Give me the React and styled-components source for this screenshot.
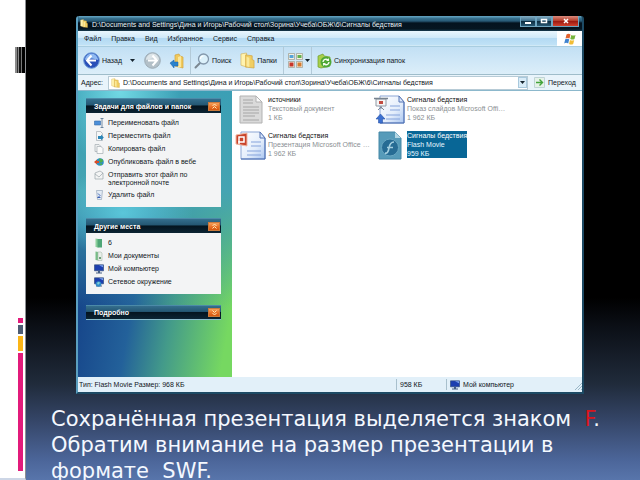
import React from "react";
import styled, { createGlobalStyle } from "styled-components";

const Global = createGlobalStyle`
  * { box-sizing: border-box; }
  body { margin: 0; background: #000; overflow: hidden; }
  button, input { font: inherit; color: inherit; margin: 0; padding: 0; border: 0; background: none; }
  svg { display: block; flex: none; }
`;

const Slide = styled.main`
  display: grid;
  grid-template-columns: 26px minmax(0, 1fr);
  height: 100vh;
`;

const Rail = styled.aside`
  display: flex;
  flex-direction: column;
  align-items: flex-end;
  background: #fff;
  border-right: 1px solid #8d8f93;
  border-bottom: 2px solid #cdd6e6;
  padding: 47px 0 7px;
`;

const Barcode = styled.div`
  width: 10px;
  height: 26px;
  margin-bottom: auto;
  background: linear-gradient(90deg, #8a8a8a 0 2px, #333 2px 3px, #8a8a8a 3px 4px, #111 4px 6px, #777 6px 7px, #000 7px 10px);
`;

const Mark = styled.div`
  width: 5px;
  height: ${(p) => p.$size}px;
  margin: 2px 2px 0 0;
  background: ${(p) => p.$color};
`;

const Stage = styled.section`
  display: flex;
  flex-direction: column;
  min-width: 0;
  min-height: 0;
  background: linear-gradient(#000 0 62%, #0b0f16 68%, #202b3b 80%, #36476a 88%, #4c669a 96%, #5875ab);
`;

const Caption = styled.p`
  flex: 0 0 86px;
  min-height: 0;
  margin: 0;
  padding: 12px 20px 0 25px;
  color: #f4f8ff;
  font: 21px/26px "DejaVu Sans", sans-serif;
  white-space: pre-wrap;
`;

const Red = styled.span`
  color: #d8141c;
`;

const Window = styled.section`
  flex: 1;
  min-height: 0;
  display: flex;
  flex-direction: column;
  margin: 16px 56px 0 50px;
  border: solid #1d4a64;
  border-width: 0 2px 2px;
  border-left-color: #5b9fc0;
  border-radius: 3px 3px 0 0;
  overflow: hidden;
  color: #10161c;
  font: 7px/9px "Liberation Sans", sans-serif;
  white-space: nowrap;
`;

const TitleBar = styled.header`
  display: flex;
  flex: 0 0 15px;
  align-items: center;
  gap: 4px;
  padding: 0 3px 0 2px;
  color: #e6f2f8;
  background: linear-gradient(#5d9cba 0 1px, #3a7592 2px, #285a77 5px, #04131f 7px, #061621 13px, #173c50);
`;

const TitleText = styled.h1`
  flex: 1;
  min-width: 0;
  margin: 0;
  padding-top: 2px;
  overflow: hidden;
  font: inherit;
`;

const Controls = styled.div`
  display: flex;
  align-self: flex-start;
`;

const Control = styled.button`
  display: grid;
  place-items: center;
  width: ${(p) => (p.$close ? 27 : 16)}px;
  height: 11px;
  border: 1px solid #6fa5c0;
  border-top: 0;
  background: ${(p) => (p.$close
    ? "linear-gradient(#d98b7d, #b8402f 45%, #98170f 50%, #d0402c)"
    : "linear-gradient(#84aec4, #42738f 45%, #0b2a3e 50%, #285873)")};
`;

const MenuBar = styled.nav`
  display: flex;
  flex: 0 0 15px;
  background: linear-gradient(#e9f6fd, #cfe9f9 45%, #b4daf3 50%, #bfe1f6 90%, #d9edf6);
`;

const MenuList = styled.div`
  display: flex;
  flex: 1;
  align-items: center;
  gap: 10px;
  padding-left: 6px;
`;

const FlagCell = styled.div`
  display: grid;
  place-items: center;
  width: 25px;
  background: #fff;
`;

const ToolBar = styled.div`
  display: flex;
  flex: 0 0 29px;
  border-top: 1px solid #a9cde0;
  border-bottom: 1px solid #9fbdca;
  background: linear-gradient(#c2e0f4, #cfe7f7 50%, #dceef9);
`;

const ToolGroup = styled.div`
  display: flex;
  align-items: center;
  justify-content: space-between;
  width: ${(p) => p.$w}px;
  padding: 0 ${(p) => p.$end || 6}px 0 ${(p) => p.$start || 3}px;
  border-right: ${(p) => (p.$last ? 0 : 1)}px solid #b3cad8;
`;

const ToolButton = styled.button`
  display: flex;
  align-items: center;
  gap: 2px;
`;

const AddressBar = styled.form`
  display: flex;
  flex: 0 0 16px;
  align-items: center;
  padding-left: 3px;
  background: #e9f4fb;
  border-bottom: 1px solid #8cb8cc;
`;

const AddressLabel = styled.label`
  width: 27px;
`;

const AddressField = styled.div`
  display: flex;
  flex: 1;
  align-items: center;
  gap: 3px;
  height: 14px;
  padding-left: 2px;
  border: 1px solid #b7cbd6;
  background: #fff;
`;

const AddressInput = styled.input`
  flex: 1;
  min-width: 0;
  height: 12px;
  outline: 0;
`;

const DropButton = styled.button`
  display: grid;
  place-items: center;
  width: 9px;
  height: 11px;
  border: 1px solid #a9c9dd;
  background: #d9ecf8;
`;

const GoButton = styled.button`
  display: flex;
  align-items: center;
  gap: 3px;
  width: 54px;
  padding-left: 6px;
`;

const Body = styled.div`
  display: grid;
  flex: 1;
  min-height: 0;
  grid-template-columns: 154px minmax(0, 1fr);
`;

const Side = styled.aside`
  display: flex;
  flex-direction: column;
  gap: 11px;
  padding: 7px 11px 0 8px;
  background:
    radial-gradient(ellipse 60px 80px at 42px 0, #7fe6f0cc, #5cc6d900),
    radial-gradient(ellipse 70px 45px at 45px 122px, #62d3e6cc, #5cc6d900),
    linear-gradient(#3b9fb5, #45a4b2 35%, #3f9fae99 50%, #3f9fae00 76%),
    linear-gradient(100deg, #17478b 20%, #23619a 45%, #439a8a 65%, #76d861 94%);
`;

const Panel = styled.section`
  background: #f3f4f5;
`;

const PanelHead = styled.header`
  display: flex;
  align-items: center;
  justify-content: space-between;
  height: 15px;
  padding: 0 1px 0 8px;
  border: 1px solid #4c8aa8;
  border-width: 1px 0 0;
  border-bottom: ${(p) => (p.$closed ? "1px solid #8bbdcc" : 0)};
  background: linear-gradient(#346e8d, #245773 42%, #04141f 50%, #0b2433);
  color: #fff;
`;

const PanelTitle = styled.h2`
  margin: 0;
  font: inherit;
  font-weight: bold;
`;

const Toggle = styled.button`
  display: grid;
  place-items: center;
  width: 12px;
  height: 9px;
  border: 1px solid #c97a3c;
  background: linear-gradient(#f3a15b, #e9742a 50%, #d4560d);
`;

const TaskList = styled.ul`
  margin: 0;
  padding: 4px 8px 5px;
  list-style: none;
`;

const Task = styled.li`
  min-height: 13px;
  padding: 2px 0;
`;

const TaskLink = styled.a`
  display: flex;
  gap: 4px;
  color: inherit;
  text-decoration: none;
  line-height: 8px;
  & > svg { margin: -1px 0; }
`;

const Files = styled.div`
  display: grid;
  grid-template-columns: repeat(auto-fill, 138px);
  grid-auto-rows: 27px;
  align-content: start;
  gap: 9px 1px;
  padding: 4px 3px;
  background: #fff;
`;

const File = styled.div`
  display: grid;
  grid-template-columns: 31px max-content;
  gap: 2px;
  justify-items: center;
  align-items: start;
`;

const FileText = styled.div`
  color: ${(p) => (p.$selected ? "#e6f6ff" : "#8b8f93")};
  background: ${(p) => (p.$selected ? "#086696" : "transparent")};
`;

const FileName = styled.div`
  color: ${(p) => (p.$selected ? "#fff" : "#101010")};
`;

const StatusBar = styled.footer`
  display: flex;
  flex: 0 0 15px;
  align-items: center;
  padding: 0 0 0 1px;
  background: #e2f0f9;
`;

const StatusCell = styled.div`
  display: flex;
  align-items: center;
  gap: 3px;
  height: 11px;
  padding-left: 3px;
  width: ${(p) => p.$w}px;
  border-left: 1px solid #a8c0cd;
`;

const StatusMain = styled.div`
  flex: 1;
`;

const Grip = styled.svg`
  margin: 3px 0 0 auto;
`;

const Caret = () => (
  <svg width="5" height="3" viewBox="0 0 5 3"><path d="M0 0h5L2.5 3z" fill="#15242e" /></svg>
);

const FolderIcon = ({ w = 8, h = 9 }) => (
  <svg width={w} height={h} viewBox="0 0 16 18">
    <path d="M1 2l6-1v15l-6-2z" fill="#fff3b0" stroke="#cfa94a" strokeWidth=".6" />
    <path d="M6 3l7 1v4l2 1v8l-9-1z" fill="#f0ce62" stroke="#d0a13a" strokeWidth=".7" />
    <path d="M7 5l3 1v10l-3-1z" fill="#fae99c" />
  </svg>
);

const RoundArrow = ({ back }) => (
  <svg width="17" height="17" viewBox="0 0 17 17">
    <circle cx="8.5" cy="8.5" r="7.8" fill={back ? "#2a50b8" : "#b3c0c8"} stroke={back ? "#6c9bd8" : "#9caab4"} />
    <path d="M2 8a6.500 6.500 0 0 1 13 0q-6-3-13 0z" fill={back ? "#8fb9f1" : "#dce4e8"} />
    <path
      d={back ? "M8.500 3.500L4 8.500l4.500 5M4.500 8.500H13" : "M8.500 3.500l4.500 5-4.500 5M12.500 8.500H4"}
      fill="none" stroke="#fff" strokeWidth="2"
    />
  </svg>
);

const FolderUp = () => (
  <svg width="15" height="16" viewBox="0 0 15 16">
    <path d="M6 2l4-1 1 2 3 1v11l-8-2z" fill="#f0c95c" stroke="#d3a33c" strokeWidth=".7" />
    <path d="M9 4l3-1v11l-3 1z" fill="#fbe79b" />
    <path d="M1 10l4-3v2h4v4H5v2z" fill="#2a82cc" stroke="#1761a8" strokeWidth=".5" />
  </svg>
);

const SearchIcon = () => (
  <svg width="16" height="16" viewBox="0 0 16 16">
    <path d="M6 10l-4.500 4.500" stroke="#7b8791" strokeWidth="2" strokeLinecap="round" />
    <circle cx="9.500" cy="6" r="5" fill="#dcf1fb" stroke="#8397ab" strokeWidth="1.300" />
    <path d="M6.500 6q0-3 3-3" stroke="#fff" strokeWidth="1.200" fill="none" />
  </svg>
);

const ViewsIcon = () => (
  <svg width="15" height="15" viewBox="0 0 15 15">
    <g fill="#f4f0e4" stroke="#9c9c8c" strokeWidth=".7">
      <path d="M.5.5h6v6h-6zM8.500.5h6v6h-6zM.5 8.500h6v6h-6zM8.500 8.500h6v6h-6z" />
    </g>
    <path d="M1.500 2h4v3h-4z" fill="#56a3d8" /><path d="M9.500 2h4v3h-4z" fill="#62b04b" />
    <path d="M1.500 9.500h4v4h-4z" fill="#c7362a" /><path d="M9.500 9.500h4v4h-4z" fill="#d57b30" />
  </svg>
);

const SyncIcon = () => (
  <svg width="15" height="16" viewBox="0 0 15 16">
    <path d="M1 3l5-2 1 2 6 1v9l-9 2-3-1z" fill="#a9cf4b" stroke="#6d9e2b" strokeWidth=".7" />
    <circle cx="9" cy="9" r="5.500" fill="#4ea836" />
    <path d="M6 9a3 3 0 0 1 5-2M12 9a3 3 0 0 1-5 2" fill="none" stroke="#f2fbea" strokeWidth="1.400" />
    <path d="M12 5v3H9zM6 13v-3h3z" fill="#f2fbea" />
  </svg>
);

const FlagIcon = () => (
  <svg width="14" height="12" viewBox="0 0 14 12">
    <path d="M3.500 1.500q2-1.500 4 0L6.500 5.500q-2-1.200-4 0z" fill="#e2622e" />
    <path d="M8.300 2q2 1 4.200 0l-1 4q-2 1-4.200 0z" fill="#76b43c" />
    <path d="M2.200 6.300q2-1.200 4 0l-1 4.200q-2-1.300-4 0z" fill="#3f83cf" />
    <path d="M7 7q2 1 4.200 0l-1 4q-2 1-4.200 0z" fill="#f2bd35" />
  </svg>
);

const GoIcon = () => (
  <svg width="11" height="11" viewBox="0 0 11 11">
    <path d="M.5.500h10v10H.5z" fill="#e5f2e8" stroke="#bfd4d6" />
    <path d="M2 5.500h6M5.500 2.500l3 3-3 3" stroke="#43a43a" strokeWidth="1.400" fill="none" />
  </svg>
);

const Chevrons = ({ down }) => (
  <svg width="5" height="6" viewBox="0 0 5 6">
    <path d={down ? "M.5.500l2 2 2-2M.5 3l2 2 2-2" : "M.5 3l2-2 2 2M.5 5.500l2-2 2 2"} fill="none" stroke="#ffe9b8" />
  </svg>
);

const Page = () => <path d="M2.500.500h4l2 2v7h-6z" fill="#f6f7f7" stroke="#a5adb3" strokeWidth=".7" />;

const Monitor = () => (
  <>
    <path d="M.5.800h9v6h-9z" fill="#1c3fb0" stroke="#35507c" strokeWidth=".7" />
    <path d="M5 1.200h4v2z" fill="#7fa6ee" /><path d="M4 7h2v1.500h2v1H2v-1h2z" fill="#465f84" />
  </>
);

const GLYPHS = {
  rename: <><path d="M.5 3h6v4h-6z" fill="#4c8fd9" stroke="#356ca8" strokeWidth=".6" /><path d="M6.500.500h3M8 .5v9M6.500 9.500h3" stroke="#53718f" strokeWidth=".8" /></>,
  move: <><Page /><path d="M4 5h3V3.500L9.800 6.500 7 9.500V8H4z" fill="#2b86b8" /></>,
  copy: <><path d="M1 .5h4l2 2v5H1z" fill="#eef0f0" stroke="#a5adb3" strokeWidth=".7" /><path d="M3 2.500h4l2 2v5H3z" fill="#fafafa" stroke="#a5adb3" strokeWidth=".7" /></>,
  web: <><circle cx="6" cy="5" r="3.800" fill="#2f8fc4" /><path d="M5 1.500q4 0 4 3L6 6zM5 8l3-2v2z" fill="#4fb04a" /><path d="M0 5l3-2.500v1.500h2v2H3v1.500z" fill="#d64f2a" /></>,
  mail: <><path d="M1 3l5-2 3 2v6H1z" fill="#f3f4f4" stroke="#9aa3a9" strokeWidth=".7" /><path d="M1 4l4 3 4-4" stroke="#9aa3a9" strokeWidth=".7" fill="none" /></>,
  trash: <><path d="M2.500.500h6l-1 9h-4z" fill="#e3ebf4" stroke="#96a6ba" strokeWidth=".7" /><path d="M4 3.500l2 2-2 2M6.500 7.500h-3" stroke="#2a54b0" strokeWidth=".9" fill="none" /></>,
  folder: <><path d="M1.500.500l3 .5v8.500l-3-.5z" fill="#8bcf9c" /><path d="M3.500 1H8v8.500H3.500z" fill="#4fa677" /></>,
  docs: <><path d="M1.500.500l3 .5v8.500l-3-.5z" fill="#78bd88" /><path d="M4 1h3l1 1v7.500H4z" fill="#e8efea" stroke="#a8b8ac" strokeWidth=".6" /><path d="M5 6h2v2H5z" fill="#6e9e7a" /></>,
  pc: <Monitor />,
  net: <><Monitor /><circle cx="4.500" cy="7" r="2.800" fill="#2f8bc9" /><path d="M3 6q2-2 3 0L4 8z" fill="#7fd0d8" /></>,
};

const SmallIcon = ({ name }) => (
  <svg width="10" height="10" viewBox="0 0 10 10">{GLYPHS[name]}</svg>
);

const TextDoc = () => (
  <svg width="24" height="29" viewBox="0 0 24 29">
    <path d="M1 1h16l6 6v21H1z" fill="#dadada" stroke="#b2b2b2" />
    <path d="M17 1v6h6z" fill="#f8f8f8" stroke="#b2b2b2" />
    <path d="M4 5h10M4 8h10M4 12h16M4 15h16M4 18h16M4 21h12M4 25h16" stroke="#a0a0a0" strokeWidth=".9" />
  </svg>
);

const SlideDoc = ({ show }) => (
  <svg width="31" height="29" viewBox="0 0 31 29">
    <defs>
      <linearGradient id="sheet" x2="1" y2="1">
        <stop stopColor="#fff" /><stop offset=".6" stopColor="#e3edfb" /><stop offset="1" stopColor="#a9c5f0" />
      </linearGradient>
    </defs>
    <path d="M6 1h19l5 6v21H6z" fill="url(#sheet)" stroke="#8ba5d4" />
    <path d="M30 7v21H6" fill="none" stroke="#4468b0" />
    <path d="M25 1v6h5z" fill="#dae7fb" stroke="#5775b4" />
    <path d="M16 11h10M16 15h10M12 20h14M12 24h14" stroke="#86a4dc" strokeWidth="1.200" />
    {show ? (
      <>
        <path d="M2 4h10v7H2z" fill="#f5f5f5" stroke="#8f9aa6" /><path d="M0 3.500h14" stroke="#77838f" strokeWidth="1.500" />
        <path d="M5 6h4v3H5z" fill="#c14c41" /><path d="M7 11v3M4 15l3-3 3 3" stroke="#7c8897" fill="none" />
        <path d="M6.500 19l4.500 5H8.500v4h-4v-4H2z" fill="#3c70d0" stroke="#2a55a8" strokeWidth=".6" />
      </>
    ) : (
      <>
        <path d="M1 4l11-2v13L1 13z" fill="#c9442b" stroke="#f0b7a2" />
        <path d="M4 6h5v5H4z" fill="none" stroke="#fff" strokeWidth="1.500" /><path d="M4 10v3" stroke="#fff" strokeWidth="1.500" />
      </>
    )}
  </svg>
);

const FlashDoc = () => (
  <svg width="24" height="29" viewBox="0 0 24 29">
    <path d="M1 1h16l6 6v21H1z" fill="#569bb9" stroke="#4588a7" />
    <path d="M17 1v6h6z" fill="#b4d7e4" />
    <circle cx="12" cy="16.500" r="8.500" fill="#276c94" stroke="#69a7c2" />
    <path d="M16 11q-4 0-5 6t-4 5M9 16.500h6" fill="none" stroke="#a4cfdf" strokeWidth="1.600" />
  </svg>
);

const PATH = "D:\\Documents and Settings\\Дина и Игорь\\Рабочий стол\\Зорина\\Учеба\\ОБЖ\\6\\Сигналы бедствия";

const PANELS = [
  {
    title: "Задачи для файлов и папок",
    items: [
      ["rename", "Переименовать файл"],
      ["move", "Переместить файл"],
      ["copy", "Копировать файл"],
      ["web", "Опубликовать файл в вебе"],
      ["mail", "Отправить этот файл по", "электронной почте"],
      ["trash", "Удалить файл"],
    ],
  },
  {
    title: "Другие места",
    items: [["folder", "6"], ["docs", "Мои документы"], ["pc", "Мой компьютер"], ["net", "Сетевое окружение"]],
  },
  { title: "Подробно", items: [] },
];

const FILES = [
  { icon: <TextDoc />, name: "источники", kind: "Текстовый документ", size: "1 КБ" },
  { icon: <SlideDoc show />, name: "Сигналы бедствия", kind: "Показ слайдов Microsoft Offi…", size: "1 962 КБ" },
  { icon: <SlideDoc />, name: "Сигналы бедствия", kind: "Презентация Microsoft Office …", size: "1 962 КБ" },
  { icon: <FlashDoc />, name: "Сигналы бедствия", kind: "Flash Movie", size: "959 КБ", selected: true },
];

export default function App() {
  return (
    <Slide>
      <Global />
      <Rail>
        <Barcode />
        <Mark $size={5} $color="#e21b7b" />
        <Mark $size={9} $color="#4d5c73" />
        <Mark $size={15} $color="#fbb517" />
        <Mark $size={118} $color="#e21b7b" />
      </Rail>
      <Stage>
        <Window>
          <TitleBar>
            <FolderIcon />
            <TitleText>{PATH}</TitleText>
            <Controls>
              <Control aria-label="Свернуть"><svg width="8" height="6"><path d="M1 5h6" stroke="#fff" strokeWidth="2" /></svg></Control>
              <Control aria-label="Развернуть"><svg width="8" height="6"><path d="M1.500 1.500h5v3h-5z" fill="none" stroke="#fff" strokeWidth="1.500" /></svg></Control>
              <Control $close aria-label="Закрыть"><svg width="8" height="6"><path d="M2 1l4 4M6 1L2 5" stroke="#fff" strokeWidth="1.500" /></svg></Control>
            </Controls>
          </TitleBar>
          <MenuBar>
            <MenuList>
              {["Файл", "Правка", "Вид", "Избранное", "Сервис", "Справка"].map((m) => <button key={m}>{m}</button>)}
            </MenuList>
            <FlagCell><FlagIcon /></FlagCell>
          </MenuBar>
          <ToolBar>
            <ToolGroup $w={113} $start={5}>
              <ToolButton><RoundArrow back />Назад</ToolButton>
              <ToolButton aria-label="Журнал"><Caret /></ToolButton>
              <ToolButton aria-label="Вперёд"><RoundArrow /></ToolButton>
              <ToolButton aria-label="Вверх"><FolderUp /></ToolButton>
            </ToolGroup>
            <ToolGroup $w={93}>
              <ToolButton><SearchIcon />Поиск</ToolButton>
              <ToolButton><FolderIcon w={15} h={17} />Папки</ToolButton>
            </ToolGroup>
            <ToolGroup $w={28} $start={4} $end={2}>
              <ToolButton aria-label="Вид"><ViewsIcon /><Caret /></ToolButton>
            </ToolGroup>
            <ToolGroup $w={120} $last $start={5}>
              <ToolButton><SyncIcon />Синхронизация папок</ToolButton>
            </ToolGroup>
          </ToolBar>
          <AddressBar>
            <AddressLabel htmlFor="address">Адрес:</AddressLabel>
            <AddressField>
              <FolderIcon w={9} h={10} />
              <AddressInput id="address" defaultValue={PATH} />
              <DropButton type="button" aria-label="Список"><Caret /></DropButton>
            </AddressField>
            <GoButton type="button"><GoIcon />Переход</GoButton>
          </AddressBar>
          <Body>
            <Side>
              {PANELS.map(({ title, items }) => (
                <Panel key={title}>
                  <PanelHead $closed={!items.length}>
                    <PanelTitle>{title}</PanelTitle>
                    <Toggle aria-label={title}><Chevrons down={!items.length} /></Toggle>
                  </PanelHead>
                  {items.length > 0 && (
                    <TaskList>
                      {items.map(([icon, text, more]) => (
                        <Task key={text}>
                          <TaskLink href="#">
                            <SmallIcon name={icon} />
                            <span>{text}{more && <><br />{more}</>}</span>
                          </TaskLink>
                        </Task>
                      ))}
                    </TaskList>
                  )}
                </Panel>
              ))}
            </Side>
            <Files>
              {FILES.map((f) => (
                <File key={f.name + f.kind}>
                  {f.icon}
                  <FileText $selected={f.selected}>
                    <FileName $selected={f.selected}>{f.name}</FileName>
                    <div>{f.kind}</div>
                    <div>{f.size}</div>
                  </FileText>
                </File>
              ))}
            </Files>
          </Body>
          <StatusBar>
            <StatusMain>Тип: Flash Movie Размер: 968 КБ</StatusMain>
            <StatusCell $w={50}>958 КБ</StatusCell>
            <StatusCell $w={136}>
              <SmallIcon name="pc" />Мой компьютер
              <Grip width="8" height="8"><path d="M1 8l7-7M4 8l4-4M7 8l1-1" stroke="#9bb8c8" /></Grip>
            </StatusCell>
          </StatusBar>
        </Window>
        <Caption>
          Сохранённая презентация выделяется знаком{"  "}<Red>F</Red>. Обратим внимание на размер презентации в формате{"  "}SWF.
        </Caption>
      </Stage>
    </Slide>
  );
}
